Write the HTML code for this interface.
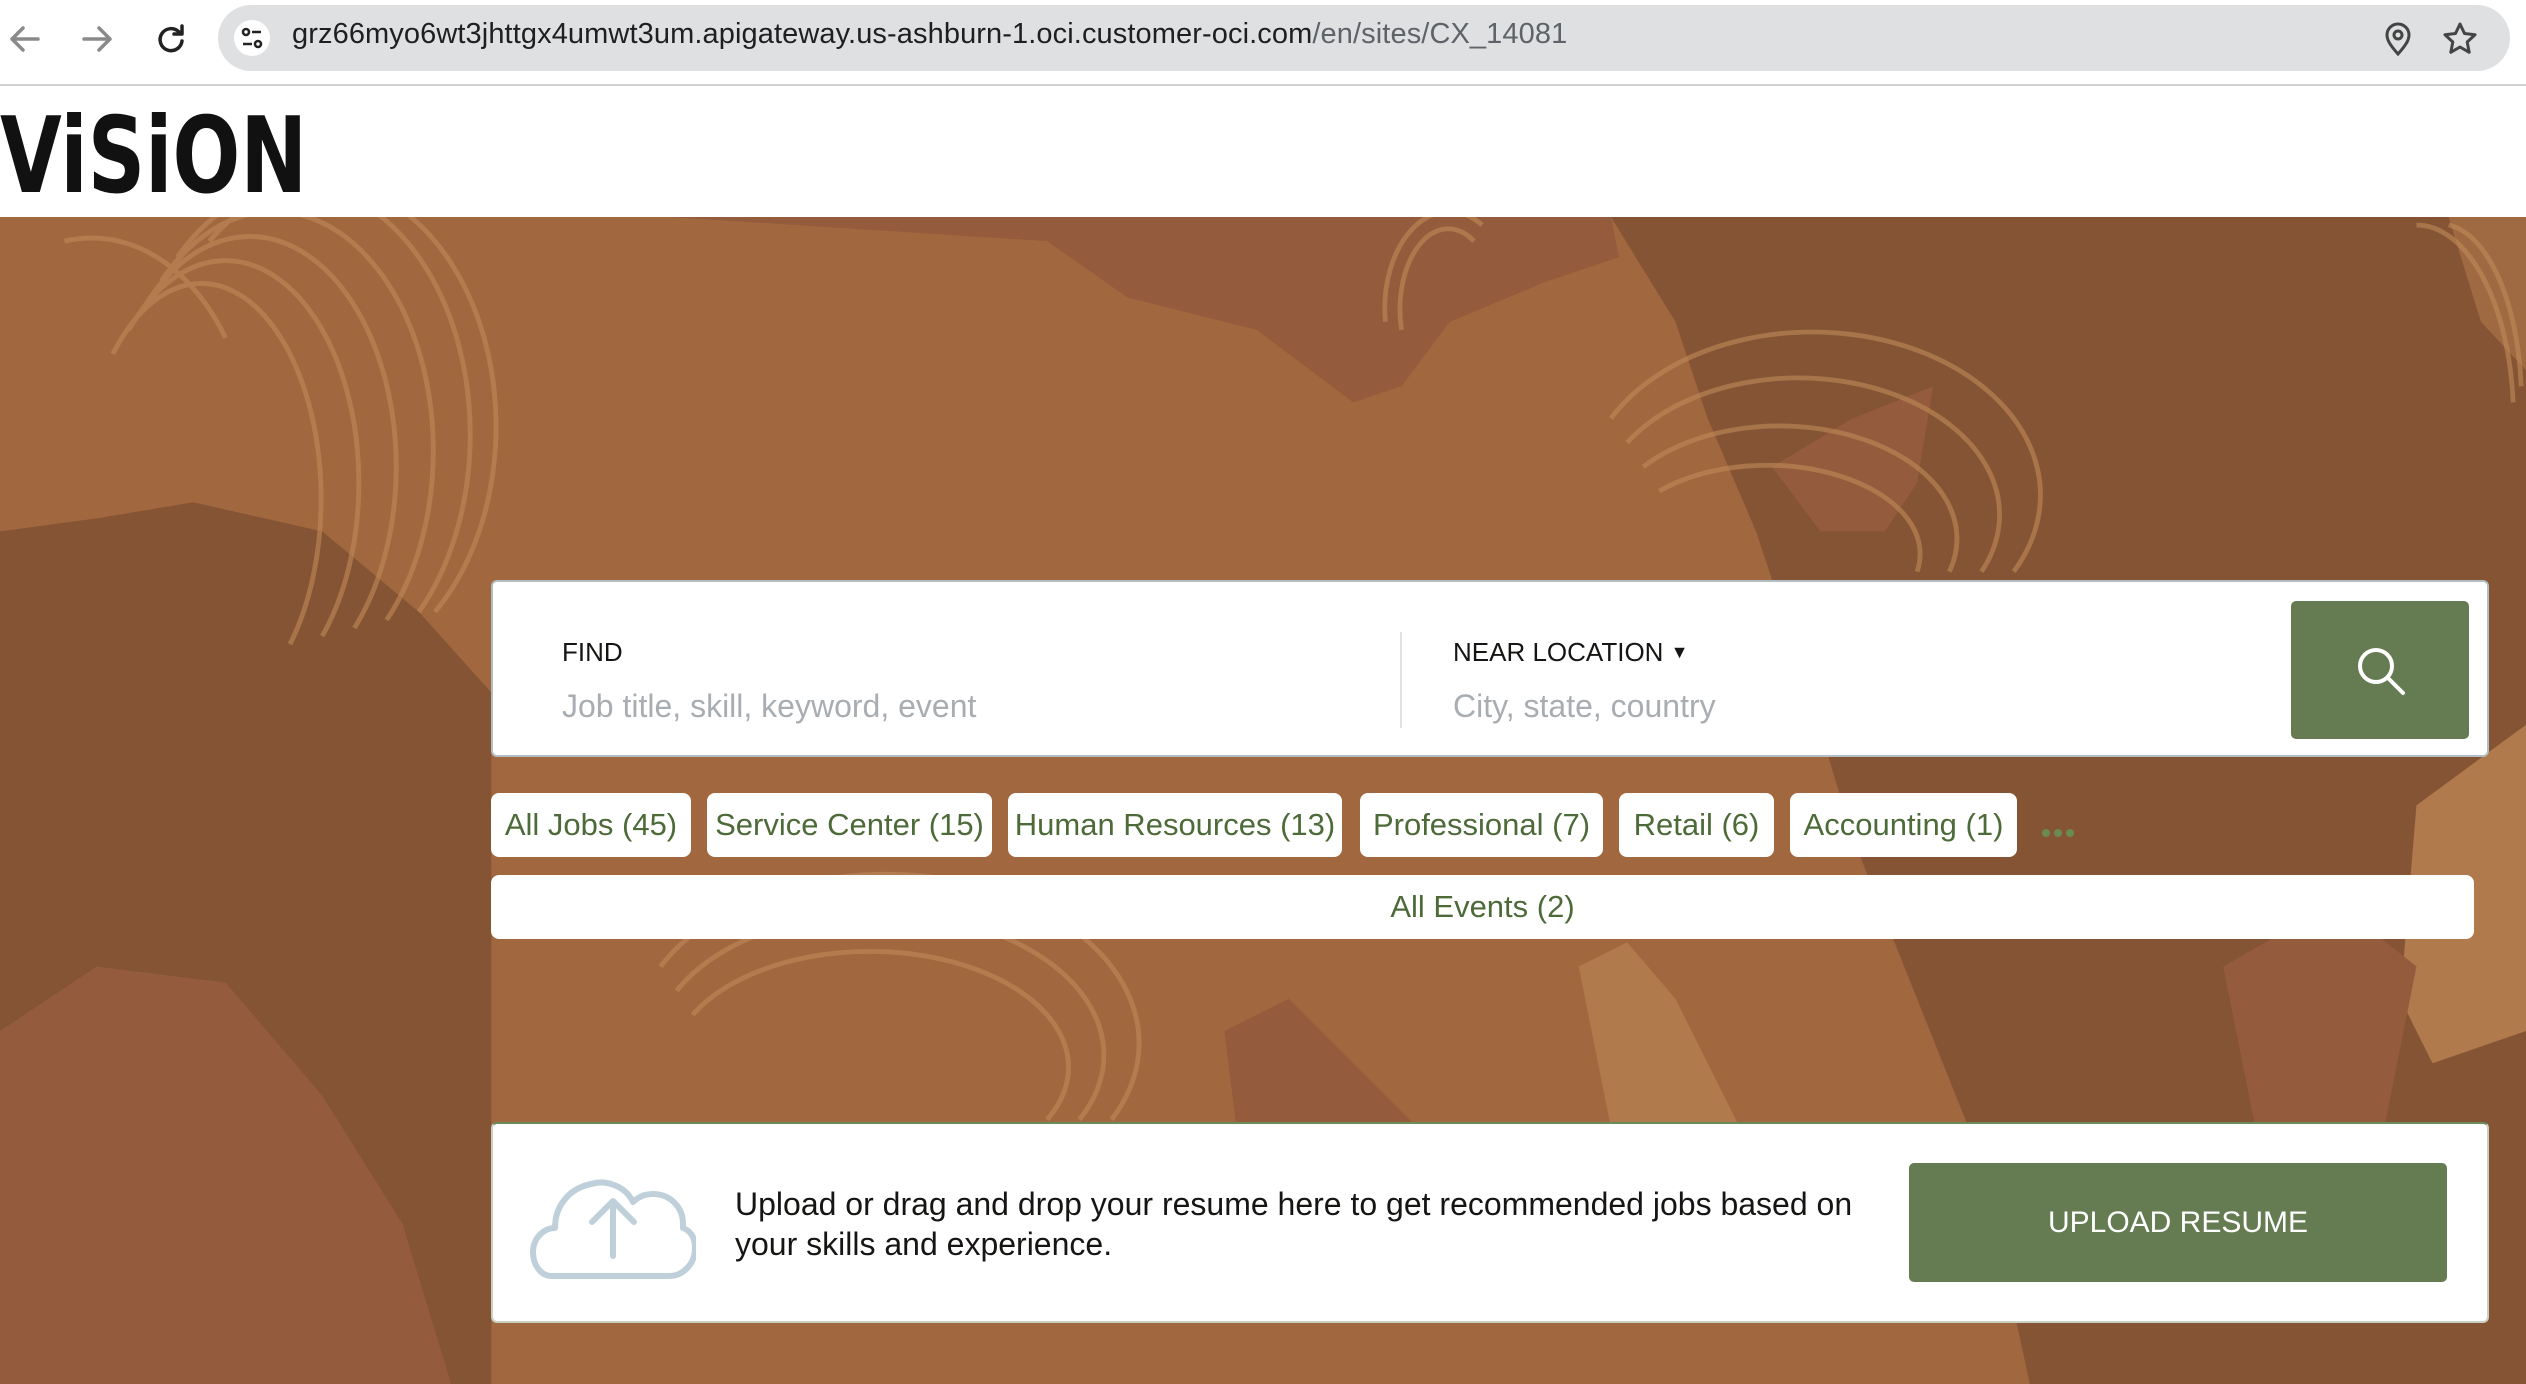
<!DOCTYPE html>
<html><head><meta charset="utf-8"><style>
*{margin:0;padding:0;box-sizing:border-box}
body{width:2526px;height:1384px;overflow:hidden;background:#fff;font-family:"Liberation Sans",sans-serif;position:relative}
.bar{position:absolute;left:0;top:0;width:2526px;height:86px;background:#fff;border-bottom:2px solid #d0d0d0}
.pill{position:absolute;left:218px;top:5px;width:2292px;height:66px;border-radius:33px;background:#dfe0e2}
.url{position:absolute;left:292px;top:18px;font-size:29px;color:#1f1f1f;letter-spacing:0.1px}
.url span{color:#5f6368}
.logo{position:absolute;left:0;top:104px;font-size:105px;line-height:105px;font-weight:bold;color:#111;font-family:"DejaVu Sans","Liberation Sans",sans-serif;transform:scaleX(0.76);transform-origin:left;white-space:nowrap}
.hero{position:absolute;left:0;top:217px;width:2526px;height:1167px;overflow:hidden}
.card{position:absolute;background:#fff;border-radius:6px}
.lbl{position:absolute;font-size:26px;color:#161513}
.ph{position:absolute;font-size:32px;color:#a8adb2}
.chip{position:absolute;top:793px;height:64px;background:#fff;border-radius:8px;color:#4d6a39;font-size:31px;line-height:64px;text-align:center}
.btn{position:absolute;background:#657b52;border-radius:5px}
</style></head><body>
<div class="bar">
<svg style="position:absolute;left:6px;top:20px" width="200" height="40" viewBox="0 0 200 40">
<g fill="none" stroke="#8a8a8a" stroke-width="3.5" stroke-linecap="round" stroke-linejoin="round"><path d="M32 19H6M17 8L6 19l11 11"/><path d="M78 19h26M93 8l11 11-11 11"/></g>
<g fill="none" stroke="#222" stroke-width="3.5" stroke-linecap="round"><path d="M173 12a11 11 0 1 0 3 9"/><path d="M176 6v8h-8" stroke-linejoin="round"/></g>
</svg>
<div class="pill"></div>
<svg style="position:absolute;left:232px;top:20px" width="40" height="36"><circle cx="20" cy="18" r="18" fill="#fff"/><g fill="none" stroke="#222" stroke-width="2.6"><circle cx="14" cy="12" r="3"/><path d="M20 12h9M11 24h9"/><circle cx="26" cy="24" r="3"/></g></svg>
<div class="url">grz66myo6wt3jhttgx4umwt3um.apigateway.us-ashburn-1.oci.customer-oci.com<span>/en/sites/CX_14081</span></div>
<svg style="position:absolute;left:2380px;top:20px" width="100" height="40"><g fill="none" stroke="#444" stroke-width="3"><path d="M18 34c-8-9-11-14-11-19a11 11 0 0 1 22 0c0 5-3 10-11 19z"/><circle cx="18" cy="15" r="4"/><path d="M80 4l4.5 9.5 10.5 1.3-7.8 7.2 2 10.3L80 27l-9.2 5.3 2-10.3L65 14.8l10.5-1.3z" stroke-linejoin="round"/></g></svg>
</div>
<div class="logo">ViSiON</div>
<div class="hero">
<svg width="2526" height="1167" viewBox="0 135 1568 724" preserveAspectRatio="none">
<rect x="0" y="135" width="1568" height="724" fill="#a1683f"/>
<path d="M416 135H1000L1005 160 960 175 900 200 870 240 840 250 780 205 700 185 650 150Z" fill="#945b3c"/>
<path d="M1000 135H1568V859H1260L1230 720 1190 620 1150 520 1120 420 1090 330 1060 260 1040 200Z" fill="#855434"/>
<path d="M1100 290L1150 260 1200 240 1190 300 1170 330 1130 330Z" fill="#945b3c"/>
<path d="M0 330L60 322 120 312 200 330 260 380 305 430 305 859H0Z" fill="#855434"/>
<path d="M0 640L60 600 140 610 200 680 250 760 280 859H0Z" fill="#945b3c"/>
<path d="M760 640L800 620 840 660 880 700 860 720 770 720Z" fill="#945b3c"/>
<path d="M980 600L1010 585 1040 620 1080 700 1000 700Z" fill="#b07a4d"/>
<path d="M1500 500L1568 450V640L1510 660 1490 620Z" fill="#b07a4d"/>
<path d="M1380 600L1450 560 1500 600 1480 700 1400 700Z" fill="#945b3c"/>
<path d="M1520 135H1568V230L1540 200Z" fill="#b07a4d" opacity=".6"/>
<g fill="none" stroke="#c08a58" stroke-width="3" opacity=".6">
<path d="M110 160a90 130 0 0 1 150 220"/><path d="M100 175a80 120 0 0 1 140 210"/><path d="M90 190a70 110 0 0 1 130 200"/><path d="M80 205a60 100 0 0 1 120 190"/><path d="M70 220a50 90 0 0 1 110 180"/><path d="M130 150a100 140 0 0 1 140 230"/><path d="M40 150a100 140 0 0 1 100 60"/>
<path d="M1000 260a140 100 0 0 1 250 95"/><path d="M1010 275a125 85 0 0 1 220 80"/><path d="M1020 290a110 70 0 0 1 190 65"/><path d="M1030 305a95 55 0 0 1 160 50"/>
<path d="M860 200a40 60 0 0 1 60-60"/><path d="M870 205a30 50 0 0 1 45-55"/>
<path d="M410 600a150 100 0 0 1 280 95"/><path d="M420 615a135 85 0 0 1 250 80"/><path d="M430 630a120 70 0 0 1 220 65"/>
<path d="M1500 140a60 120 0 0 1 60 110"/><path d="M1520 140a50 110 0 0 1 45 100"/>
</g>
</svg>
</div>
<div class="card" style="left:491px;top:580px;width:1998px;height:177px;border:2px solid #b3bdc4"></div>
<div class="lbl" style="left:562px;top:637px">FIND</div>
<div class="ph" style="left:562px;top:688px">Job title, skill, keyword, event</div>
<div style="position:absolute;left:1400px;top:632px;width:2px;height:96px;background:#e2e2e2"></div>
<div class="lbl" style="left:1453px;top:637px">NEAR LOCATION <span style="font-size:18px;position:relative;top:-3px">&#9660;</span></div>
<div class="ph" style="left:1453px;top:688px">City, state, country</div>
<div class="btn" style="left:2291px;top:601px;width:178px;height:138px"><svg style="position:absolute;left:64px;top:44px" width="54" height="54"><g fill="none" stroke="#fff" stroke-width="4" stroke-linecap="round"><circle cx="21" cy="21" r="16"/><path d="M33 33l15 15"/></g></svg></div>
<div class="chip" style="left:491px;width:200px">All Jobs (45)</div>
<div class="chip" style="left:707px;width:285px">Service Center (15)</div>
<div class="chip" style="left:1008px;width:334px">Human Resources (13)</div>
<div class="chip" style="left:1360px;width:243px">Professional (7)</div>
<div class="chip" style="left:1619px;width:155px">Retail (6)</div>
<div class="chip" style="left:1790px;width:227px">Accounting (1)</div>
<svg style="position:absolute;left:2040px;top:826px" width="40" height="14"><g fill="#6a8a54"><circle cx="6" cy="7" r="4"/><circle cx="18" cy="7" r="4"/><circle cx="30" cy="7" r="4"/></g></svg>
<div class="chip" style="left:491px;top:875px;width:1983px;height:64px">All Events (2)</div>
<div class="card" style="left:491px;top:1122px;width:1998px;height:201px;border:2px solid #c8d0c4;border-top-color:#6d8a5a"></div>
<svg style="position:absolute;left:530px;top:1164px" width="166" height="118" viewBox="0 0 166 118"><g fill="none" stroke="#bfd0da" stroke-width="6" stroke-linejoin="round" stroke-linecap="round"><path d="M40 112H22C10 112 3 100 3 88c0-13 10-24 22-24 0-24 16-40 36-44 16-5 35 3 42 18 6-6 13-8 20-8 17 0 30 13 30 30 0 2 0 3 0 4 8 3 12 10 12 20 0 16-12 28-26 28H40z"/><path d="M83 92V38M62 58l21-21 21 21"/></g></svg>
<div style="position:absolute;left:735px;top:1184px;font-size:32px;line-height:40px;color:#161513">Upload or drag and drop your resume here to get recommended jobs based on<br>your skills and experience.</div>
<div class="btn" style="left:1909px;top:1163px;width:538px;height:119px;color:#fff;font-size:30px;line-height:119px;text-align:center">UPLOAD RESUME</div>
</body></html>
